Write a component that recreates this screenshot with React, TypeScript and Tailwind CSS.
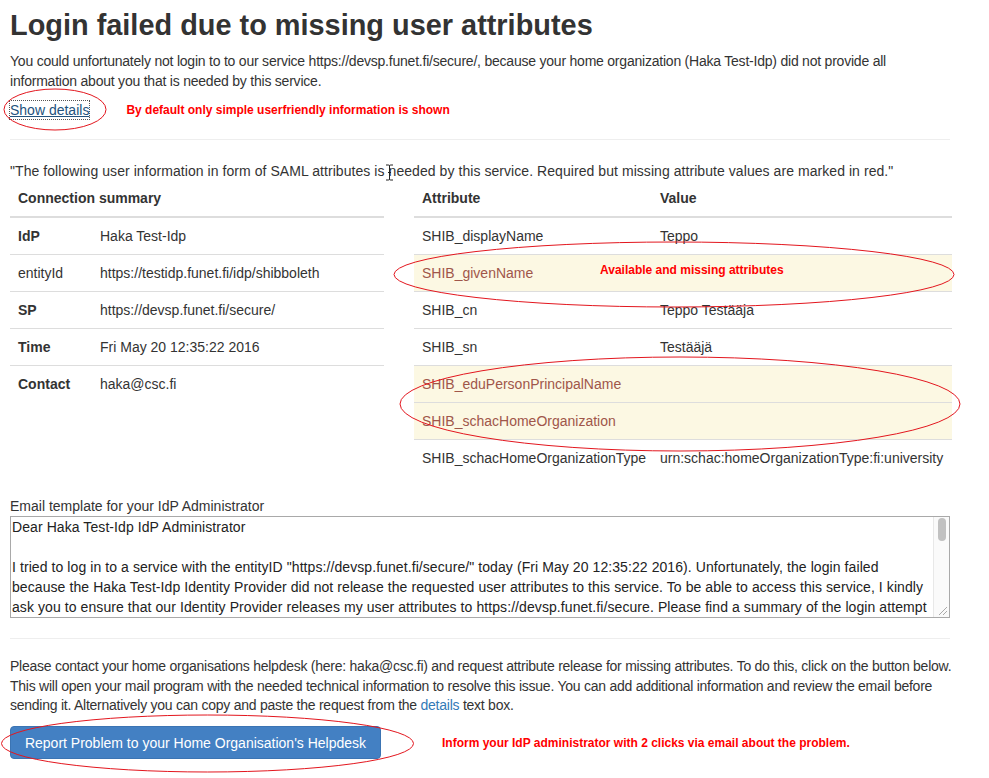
import React from "react";

const leftRows: [string, string, boolean][] = [
  ["IdP", "Haka Test-Idp", true],
  ["entityId", "https://testidp.funet.fi/idp/shibboleth", false],
  ["SP", "https://devsp.funet.fi/secure/", true],
  ["Time", "Fri May 20 12:35:22 2016", true],
  ["Contact", "haka@csc.fi", true],
];

const rightRows: [string, string, boolean][] = [
  ["SHIB_displayName", "Teppo", false],
  ["SHIB_givenName", "", true],
  ["SHIB_cn", "Teppo Testääja", false],
  ["SHIB_sn", "Testääjä", false],
  ["SHIB_eduPersonPrincipalName", "", true],
  ["SHIB_schacHomeOrganization", "", true],
  ["SHIB_schacHomeOrganizationType", "urn:schac:homeOrganizationType:fi:university", false],
];

export default function App() {
  return (
    <div className="relative w-[989px] h-[778px] overflow-hidden bg-white text-[#333] font-['Liberation_Sans',Arial,sans-serif]">
      <div className="pl-[10px]">
        <h1 className="pt-[8px] text-[28.9px] leading-[34px] font-bold text-[#333] whitespace-nowrap">
          Login failed due to missing user attributes
        </h1>
        <p className="mt-[9px] text-[14px] leading-[20px] w-[940px] tracking-[-0.22px]">
          <span className="whitespace-nowrap">
            You could unfortunately not login to to our service https://devsp.funet.fi/secure/, because your home organization (Haka Test-Idp) did not provide all
          </span>
          <br />
          information about you that is needed by this service.
        </p>
        <div className="mt-[9px] h-[20px] flex items-center text-[14px] leading-[20px]">
          <a className="text-[#23527c] underline outline outline-1 outline-dotted outline-[#555] outline-offset-0 h-[18px] leading-[18px]">
            Show details
          </a>
          <span className="ml-[37px] text-[12px] font-bold text-[#ff0000] whitespace-nowrap">
            By default only simple userfriendly information is shown
          </span>
        </div>
        <div className="mt-[19px] h-px w-[940px] bg-[#eeeeee]" />
        <p className="mt-[21px] text-[14px] leading-[20px] whitespace-nowrap tracking-[0.06px]">
          "The following user information in form of SAML attributes is needed by this service. Required but missing attribute values are marked in red."
        </p>

        <div className="-mt-px flex gap-[30px] text-[14px] leading-[20px]">
          {/* Connection summary */}
          <div className="w-[374px]">
            <div className="px-[8px] py-[8px] font-bold border-b-2 border-[#dddddd]">Connection summary</div>
            {leftRows.map(([k, v, bold], i) => (
              <div key={k} className={`flex ${i > 0 ? "border-t border-[#dddddd]" : ""}`}>
                <div className={`w-[82px] pl-[8px] py-[8px] ${bold ? "font-bold" : ""}`}>{k}</div>
                <div className="px-[8px] py-[8px] whitespace-nowrap">{v}</div>
              </div>
            ))}
          </div>
          {/* Attributes */}
          <div className="w-[538px]">
            <div className="flex font-bold border-b-2 border-[#dddddd]">
              <div className="w-[238px] px-[8px] py-[8px]">Attribute</div>
              <div className="px-[8px] py-[8px]">Value</div>
            </div>
            {rightRows.map(([k, v, missing], i) => (
              <div
                key={k}
                className={`flex ${i > 0 ? "border-t border-[#dddddd]" : ""} ${missing ? "bg-[#fcf8e3] text-[#a0564a]" : ""}`}
              >
                <div className="w-[238px] px-[8px] py-[8px] whitespace-nowrap">{k}</div>
                <div className="px-[8px] py-[8px] whitespace-nowrap">{v || "\u00a0"}</div>
              </div>
            ))}
          </div>
        </div>

        <div className="mt-[21px] text-[14px] leading-[19px]">Email template for your IdP Administrator</div>
        <div className="relative w-[940px] h-[102px] border border-[#a9a9a9] bg-white overflow-hidden">
          <div className="pl-[1px] pr-[20px] text-[14px] leading-[20px] text-[#222] whitespace-nowrap tracking-[0.08px]">
            <div>Dear Haka Test-Idp IdP Administrator</div>
            <div>&nbsp;</div>
            <div>
              I tried to log in to a service with the entityID "https://devsp.funet.fi/secure/" today (Fri May 20 12:35:22 2016). Unfortunately, the login failed
            </div>
            <div>
              because the Haka Test-Idp Identity Provider did not release the requested user attributes to this service. To be able to access this service, I kindly
            </div>
            <div>
              ask you to ensure that our Identity Provider releases my user attributes to https://devsp.funet.fi/secure. Please find a summary of the login attempt
            </div>
          </div>
          {/* scrollbar */}
          <div className="absolute right-0 top-0 bottom-0 w-[16px] bg-[#fafafa] border-l border-[#e8e8e8]">
            <div className="mx-auto mt-[1px] w-[8px] h-[23px] rounded-full bg-[#c1c1c1]" />
          </div>
          <svg className="absolute right-[1px] bottom-[1px]" width="11" height="11" viewBox="0 0 11 11">
            <line x1="10" y1="2" x2="2" y2="10" stroke="#aaa" strokeWidth="1" />
            <line x1="10" y1="6" x2="6" y2="10" stroke="#aaa" strokeWidth="1" />
          </svg>
        </div>

        <div className="mt-[20px] h-px w-[940px] bg-[#eeeeee]" />
        <p className="mt-[18px] text-[14px] leading-[19.5px] whitespace-nowrap tracking-[-0.25px]">
          Please contact your home organisations helpdesk (here: haka@csc.fi) and request attribute release for missing attributes. To do this, click on the button below.
          <br />
          This will open your mail program with the needed technical information to resolve this issue. You can add additional information and review the email before
          <br />
          sending it. Alternatively you can copy and paste the request from the <a className="text-[#337ab7]">details</a> text box.
        </p>
        <div className="mt-[10.5px] flex items-center">
          <button className="h-[33px] w-[371px] rounded-[4px] bg-[#4380c3] border border-[#3b74b3] text-white text-[14px] leading-[20px] whitespace-nowrap">
            Report Problem to your Home Organisation's Helpdesk
          </button>
          <span className="ml-[61px] text-[12px] font-bold text-[#ff0000] whitespace-nowrap">
            Inform your IdP administrator with 2 clicks via email about the problem.
          </span>
        </div>
      </div>

      {/* annotation overlay text */}
      <div className="absolute left-[600px] top-[262px] text-[12px] leading-[16px] font-bold text-[#ff0000] whitespace-nowrap">
        Available and missing attributes
      </div>

      {/* text cursor */}
      <svg className="absolute left-[385px] top-[164px]" width="9" height="17" viewBox="0 0 9 17">
        <path d="M1 1 H3.5 Q4.5 1 4.5 2 V15 Q4.5 16 3.5 16 H1 M8 1 H5.5 Q4.5 1 4.5 2 M4.5 15 Q4.5 16 5.5 16 H8 M3 8.5 H6" fill="none" stroke="#222" strokeWidth="1" />
      </svg>

      {/* red annotation ellipses */}
      <svg className="absolute left-0 top-0 pointer-events-none" width="989" height="778" viewBox="0 0 989 778">
        <g fill="none" stroke="#e3161e" strokeWidth="1">
          <ellipse cx="55" cy="109.5" rx="51" ry="20.5" />
          <ellipse cx="674" cy="274.5" rx="280" ry="32.5" />
          <ellipse cx="680" cy="404" rx="280" ry="47" />
          <ellipse cx="207.5" cy="743.5" rx="206" ry="28.5" />
        </g>
      </svg>
    </div>
  );
}
